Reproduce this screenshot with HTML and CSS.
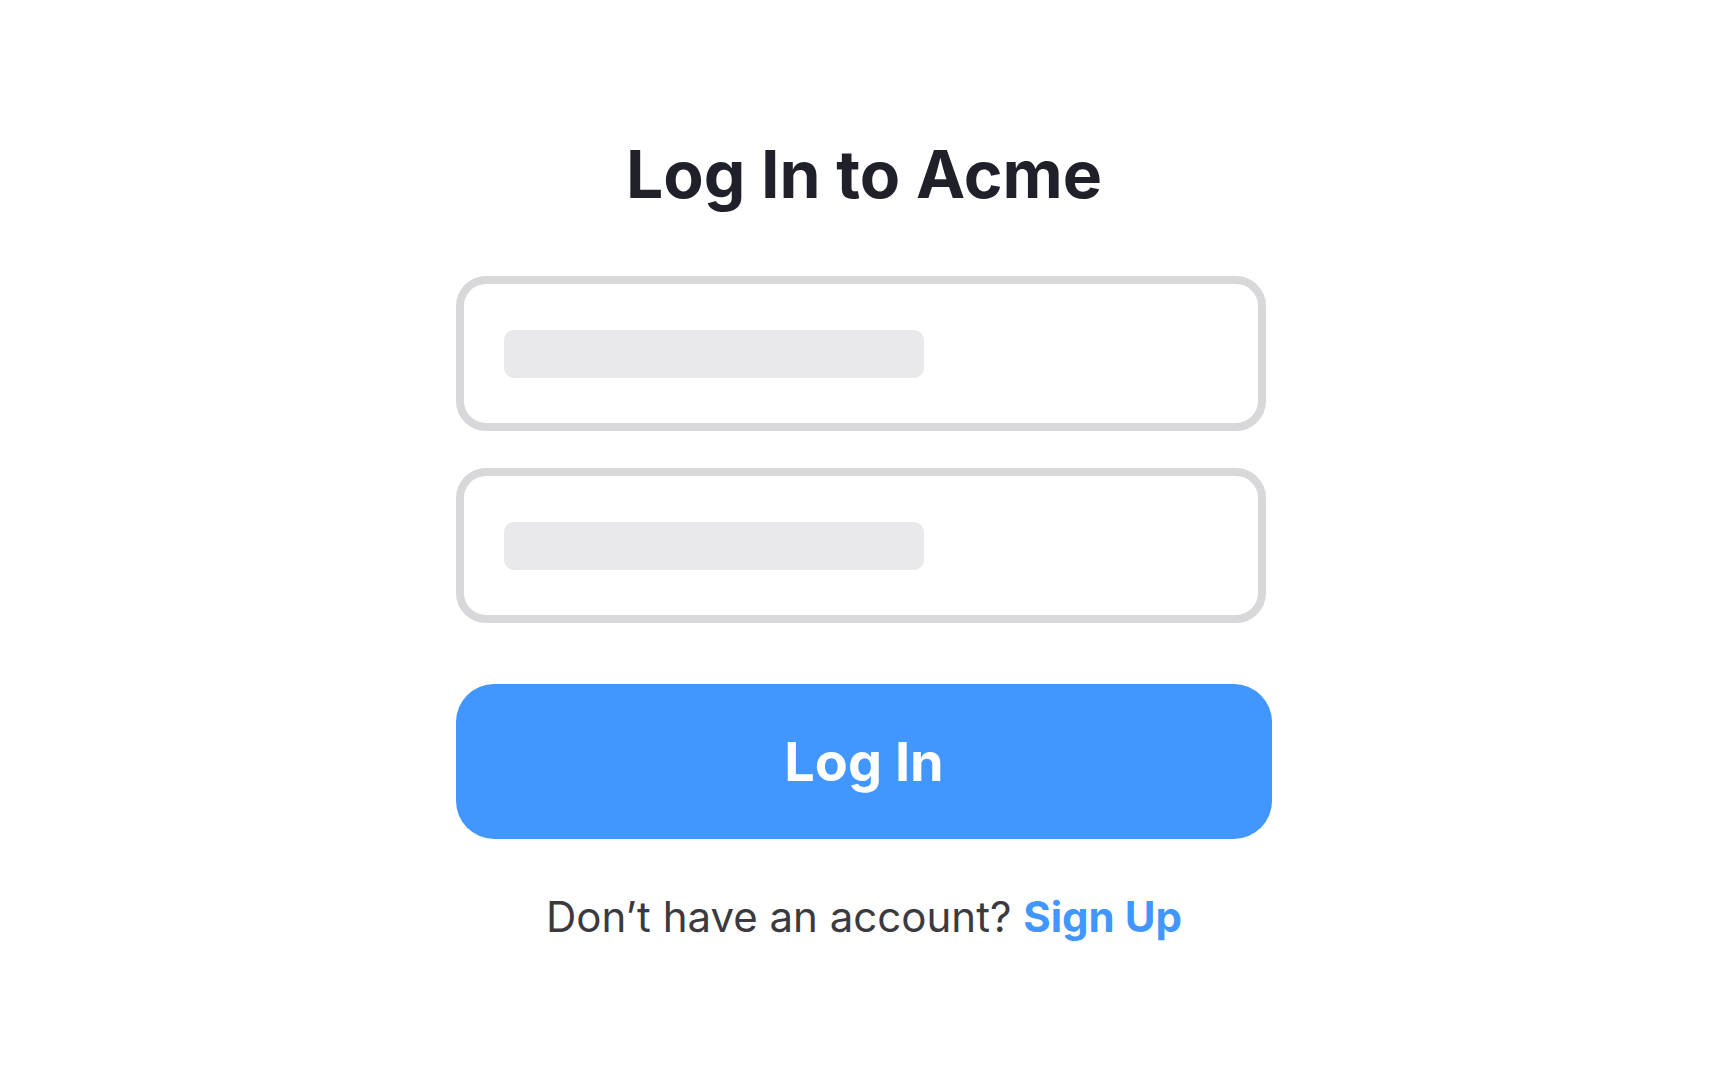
FILE: index.html
```html
<!DOCTYPE html>
<html lang="en">
  <head>
    <meta charset="UTF-8" />
    <meta name="viewport" content="width=device-width, initial-scale=1.0" />
    <title>Log In to Acme</title>
    <link rel="stylesheet" href="styles.css">
  </head>

  <body>
    <div class="container">
      <h1>Log In to Acme</h1>

      <form id="login">
        <!-- skeleton fields, no real inputs yet -->
        <div class="field">
          <span class="field__bar"></span>
        </div>
        <div class="field">
          <span class="field__bar"></span>
        </div>
        <button type="button">Log In</button>
      </form>

      <p class="signup">Don’t have an account? <a href="#">Sign Up</a></p>
    </div>
  </body>
</html>
```

FILE: styles.css
```css
/* CSS Reset */
html {
  box-sizing: border-box;
  font-size: 16px;
}

*,
*:before,
*:after {
  box-sizing: inherit;
}

body,
h1,
p {
  margin: 0;
  padding: 0;
  font-weight: normal;
}

body {
  font-family: Inter, "Noto Sans", sans-serif;
  background: #fff;
}

.container {
  width: 816px;
  margin: 0 auto;
  padding-top: 134px;
  display: flex;
  flex-direction: column;
}

h1 {
  font-size: 66px;
  line-height: 80px;
  font-weight: bold;
  color: #1f2029;
  text-align: center;
}

form {
  margin-top: 62px;
  display: flex;
  flex-direction: column;
}

.field {
  width: 810px;
  height: 155px;
  border: 8px solid #d8d8da;
  border-radius: 30px;
  padding: 0 40px;
  display: flex;
  align-items: center;
}

.field + .field {
  margin-top: 37px;
}

.field__bar {
  width: 420px;
  height: 48px;
  border-radius: 10px;
  background: #e9e9eb;
}

form button {
  margin-top: 61px;
  height: 155px;
  width: 100%;
  border: none;
  border-radius: 38px;
  background: #4197fd;
  color: #fff;
  font-family: inherit;
  font-size: 54px;
  font-weight: bold;
  cursor: pointer;
}

.signup {
  margin-top: 53px;
  font-size: 42px;
  line-height: 50px;
  color: #3a3a40;
  text-align: center;
}

.signup a {
  color: #4197fd;
  font-weight: bold;
  text-decoration: none;
}
```
